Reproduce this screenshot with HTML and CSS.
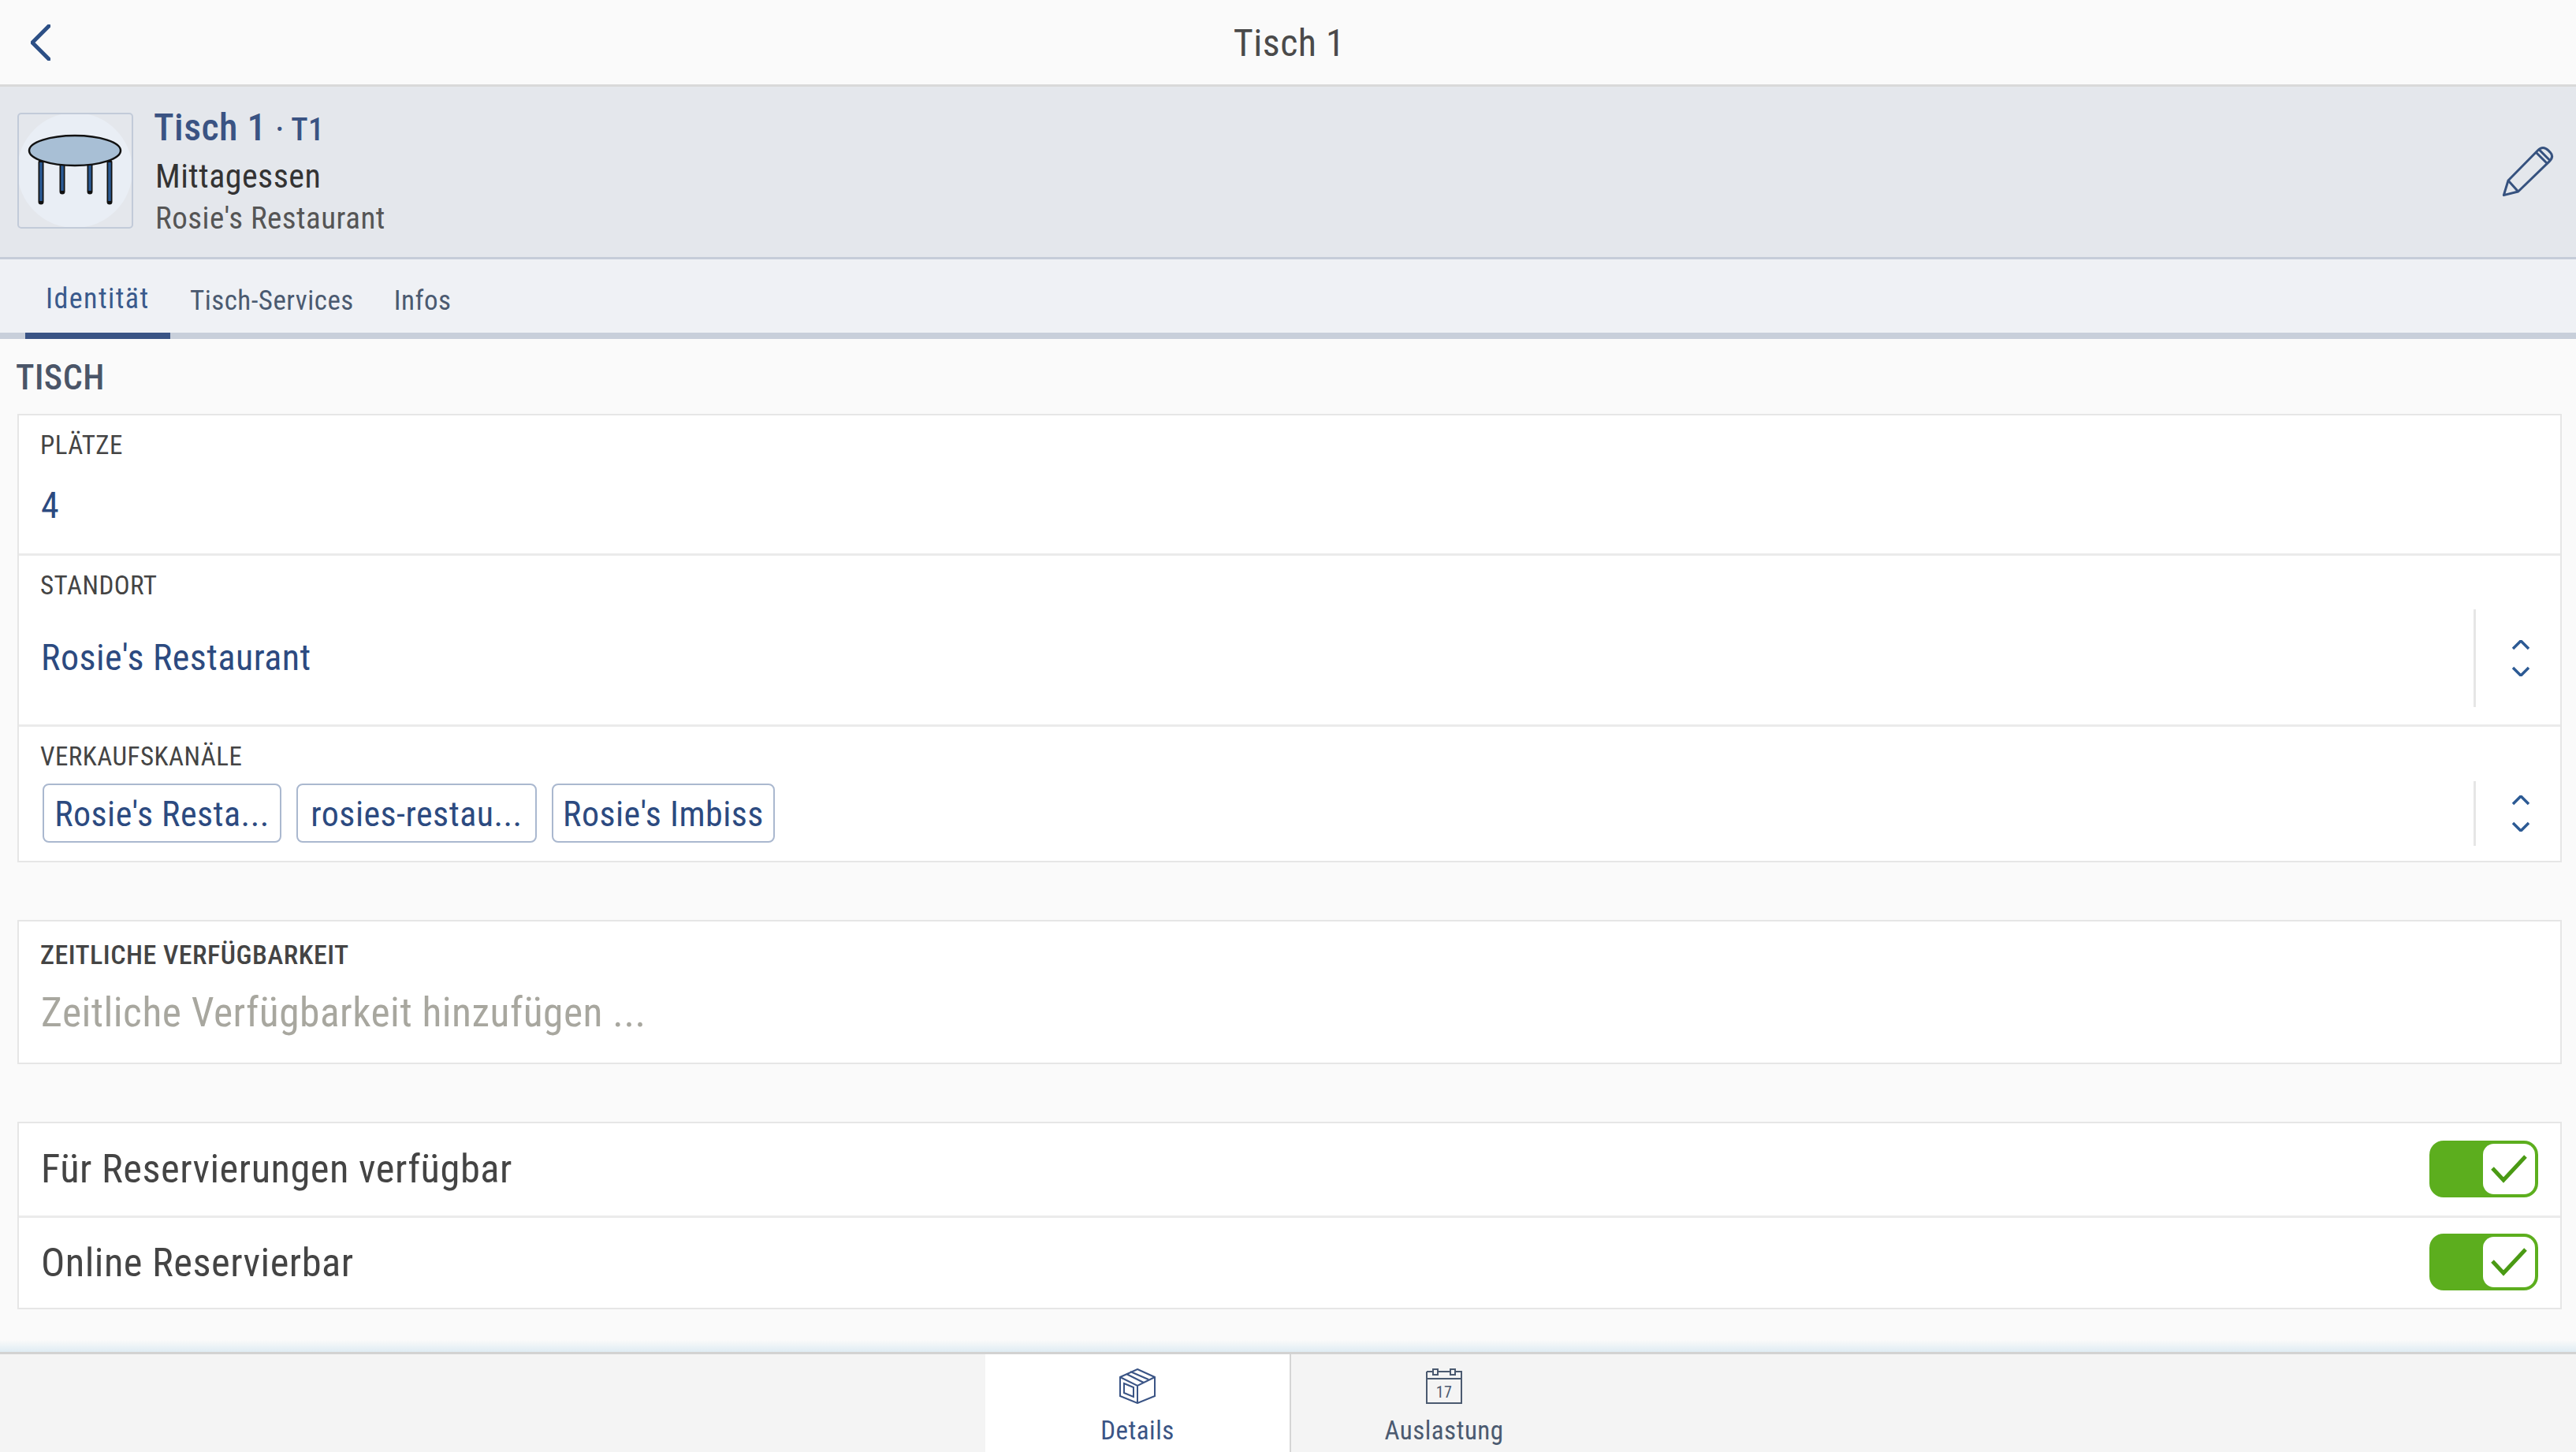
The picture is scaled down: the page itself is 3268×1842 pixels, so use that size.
FILE: index.html
```html
<!DOCTYPE html>
<html lang="de">
<head>
    <meta charset="UTF-8">
    <title>Tisch 1</title>
    <link rel="stylesheet" href="styles.css">
</head>
<body>
    <!-- Top bar -->
    <header class="topbar">
        <svg class="back" width="25" height="46" viewBox="0 0 25 46"><path d="M23 2 L2 23 L23 44"/></svg>
        <div class="topbar-title">Tisch 1</div>
    </header>

    <!-- Table summary -->
    <section class="summary">
        <div class="thumb">
            <svg width="143" height="143" viewBox="24 144 143 143">
                <circle class="thumb-bg" cx="95" cy="215" r="73"/>
                <g class="leg"><line x1="52" y1="205" x2="52" y2="255"/><line x1="79" y1="205" x2="79" y2="242"/><line x1="114" y1="205" x2="114" y2="242"/><line x1="139" y1="205" x2="139" y2="255"/></g>
                <g class="leg-in"><line x1="52" y1="205" x2="52" y2="254"/><line x1="79" y1="205" x2="79" y2="241"/><line x1="114" y1="205" x2="114" y2="241"/><line x1="139" y1="205" x2="139" y2="254"/></g>
                <ellipse class="table-top" cx="95" cy="190" rx="58" ry="19"/>
            </svg>
        </div>
        <div class="summary-text">
            <div class="summary-name">Tisch 1 <small>· T1</small></div>
            <div class="summary-service">Mittagessen</div>
            <div class="summary-place">Rosie's Restaurant</div>
        </div>
        <svg class="pencil" width="70" height="70" viewBox="810 160 210 210">
            <path d="M826 354 L843 298 L955 184 Q975 163 995 183 L1003 191 Q1018 207 1000 225 L881 340 Z"/>
            <path d="M843 298 L881 340 M948 190 L990 232 M960 180 L1000 220"/>
        </svg>
    </section>

    <!-- Tabs -->
    <nav class="tabs">
        <div class="tab active">Identität</div>
        <div class="tab">Tisch-Services</div>
        <div class="tab">Infos</div>
    </nav>

    <main class="content">
        <h2 class="section-title">TISCH</h2>

        <div class="card">
            <div class="row row-seats">
                <div class="field-label">PLÄTZE</div>
                <div class="field-value">4</div>
            </div>
            <div class="row row-place">
                <div class="field-label">STANDORT</div>
                <div class="field-value">Rosie's Restaurant</div>
                <div class="picker picker-tall">
                    <svg width="22" height="46" viewBox="0 0 22 46"><path d="M1 11 L11 1 L21 11 M1 35 L11 45 L21 35"/></svg>
                </div>
            </div>
            <div class="row row-channels">
                <div class="field-label">VERKAUFSKANÄLE</div>
                <div class="chips">
                    <span class="chip chip-1">Rosie's Resta...</span>
                    <span class="chip chip-2">rosies-restau...</span>
                    <span class="chip chip-3">Rosie's Imbiss</span>
                </div>
                <div class="picker picker-short">
                    <svg width="22" height="46" viewBox="0 0 22 46"><path d="M1 11 L11 1 L21 11 M1 35 L11 45 L21 35"/></svg>
                </div>
            </div>
        </div>

        <div class="card card-gap">
            <div class="row row-time">
                <div class="field-label strong">ZEITLICHE VERFÜGBARKEIT</div>
                <div class="field-placeholder">Zeitliche Verfügbarkeit hinzufügen ...</div>
            </div>
        </div>

        <div class="card card-gap">
            <div class="row row-toggle">
                <span>Für Reservierungen verfügbar</span>
                <div class="toggle"><div class="knob"><svg width="46" height="38" viewBox="0 0 46 38"><path d="M2 18 L16 33 L44 3"/></svg></div></div>
            </div>
            <div class="row row-toggle">
                <span>Online Reservierbar</span>
                <div class="toggle"><div class="knob"><svg width="46" height="38" viewBox="0 0 46 38"><path d="M2 18 L16 33 L44 3"/></svg></div></div>
            </div>
        </div>
    </main>

    <div class="shade"></div>

    <!-- Bottom navigation -->
    <footer class="bottombar">
        <div class="bottom-tab active">
            <svg width="46" height="45" viewBox="0 0 46 45">
                <path d="M23 1 L45 11 V35 L23 44 L1 35 V11 Z M1 11 L23 22 L45 11 M23 22 V44 M14 4 L37 14 M9 7 L31 18 M6 19 L18 24 V36 L6 31 Z"/>
            </svg>
            <span>Details</span>
        </div>
        <div class="bottom-tab">
            <svg width="46" height="45" viewBox="0 0 46 45">
                <path d="M1 4 H9 M15 4 H31 M37 4 H45 V44 H1 V4 M1 13 H45 M9 1 H15 V8 H9 Z M31 1 H37 V8 H31 Z"/>
                <text x="23" y="37" text-anchor="middle">17</text>
            </svg>
            <span>Auslastung</span>
        </div>
    </footer>
</body>
</html>
```

FILE: styles.css
```css
* {
    box-sizing: border-box;
}

body {
    margin: 0;
    width: 3268px;
    height: 1842px;
    overflow: hidden;
    display: flex;
    flex-direction: column;
    font-family: "Roboto", "Liberation Sans", sans-serif;
    font-stretch: 75%;
    letter-spacing: 0.03em;
    background-color: #fafafa;
    color: #444;
}

svg {
    display: block;
    fill: none;
}

/* top bar */
.topbar {
    height: 110px;
    flex: none;
    display: grid;
    grid-template-columns: 1fr auto 1fr;
    align-items: center;
    padding-left: 39px;
    background: #fafafa;
    border-bottom: 3px solid #d9d9d9;
}

.back path {
    stroke: #2c4f85;
    stroke-width: 5;
    stroke-linecap: round;
    stroke-linejoin: round;
}

.topbar-title {
    padding-top: 2px;
    font-size: 48px;
    color: #4a4a4a;
    margin-left: -36px;
}

/* summary */
.summary {
    height: 219px;
    flex: none;
    display: flex;
    align-items: center;
    padding: 0 27px 4px 22px;
    background: #e4e7ec;
    border-bottom: 3px solid #c5ccd9;
}

.thumb {
    width: 147px;
    height: 147px;
    flex: none;
    overflow: hidden;
    border: 2px solid #c2cbd9;
    border-radius: 5px;
    background: #e4e7ec;
    margin-right: 26px;
}

.thumb-bg {
    fill: #e9eef5;
}

.leg line {
    stroke: #111;
    stroke-width: 7;
    stroke-linecap: round;
}

.leg-in line {
    stroke: #2a5a94;
    stroke-width: 3.5;
}

.table-top {
    fill: #a8bfd5;
    stroke: #111;
    stroke-width: 2.5;
}

.summary-name {
    font-size: 48px;
    font-weight: 500;
    line-height: 60px;
    color: #3a5383;
}

.summary-name small {
    font-size: 40px;
}

.summary-service {
    margin-left: 2px;
    font-size: 42px;
    line-height: 58px;
    color: #333;
}

.summary-place {
    margin-left: 2px;
    font-size: 39px;
    line-height: 48px;
    color: #555;
}

.pencil {
    margin-left: auto;
    margin-top: 4px;
}

.pencil path {
    stroke: #36527f;
    stroke-width: 9;
    stroke-linejoin: round;
}

/* tabs */
.tabs {
    height: 101px;
    flex: none;
    display: flex;
    padding-left: 32px;
    background: #eff1f5;
    border-bottom: 8px solid #c8cfda;
}

.tab {
    height: 101px;
    padding: 6px 26px 2px 25px;
    display: flex;
    align-items: center;
    font-size: 35px;
    color: #4b5a70;
}

.tab.active {
    width: 184px;
    padding: 6px 0 0 26px;
    font-size: 36px;
    letter-spacing: 0.04em;
    color: #3a5a8c;
    border-bottom: 8px solid #3a5485;
}

/* content */
.content {
    flex: 1;
    padding: 0 18px 0 22px;
}

.section-title {
    margin: 0 0 0 -2px;
    height: 95px;
    line-height: 98px;
    font-size: 44px;
    font-weight: 500;
    color: #4a5568;
}

.card {
    background: #fff;
    border: 2px solid #e6e6e6;
}

.card-gap {
    margin-top: 73px;
}

.row {
    position: relative;
    padding: 0 28px;
}

.row + .row {
    border-top: 3px solid #ebebeb;
}

.row-seats {
    height: 175px;
}

.row-place {
    height: 217px;
}

.row-channels {
    height: 173px;
}

.row-time {
    height: 179px;
}

.field-label {
    margin-left: -1px;
    padding-top: 18px;
    font-size: 33px;
    line-height: 40px;
    color: #444;
}

.field-label.strong {
    padding-top: 22px;
    font-size: 34px;
    font-weight: 500;
}

.field-value {
    margin-top: 28px;
    font-size: 46px;
    line-height: 56px;
    color: #2c4a80;
}

.row-place .field-value {
    margin-top: 43px;
}

.field-placeholder {
    margin-top: 24px;
    font-size: 51.5px;
    line-height: 60px;
    color: #a8a79f;
}

.picker {
    position: absolute;
    right: 0;
    width: 110px;
    padding-left: 6px;
    display: flex;
    align-items: center;
    justify-content: center;
    border-left: 3px solid #e6e6e6;
}

.picker-tall {
    top: 68px;
    height: 124px;
}

.picker-short {
    top: 69px;
    height: 82px;
}

.picker path {
    stroke: #2c5a94;
    stroke-width: 3.5;
}

.chips {
    display: flex;
    gap: 19px;
    margin: 14px 0 0 2px;
}

.chip {
    height: 75px;
    padding-top: 2px;
    display: flex;
    align-items: center;
    justify-content: center;
    white-space: nowrap;
    font-size: 44px;
    color: #2c4a80;
    border: 2px solid #aab8cf;
    border-radius: 8px;
}

.chip-1 {
    width: 303px;
}

.chip-2 {
    width: 305px;
}

.chip-3 {
    width: 283px;
}

.row-toggle {
    height: 117px;
    display: flex;
    align-items: center;
    justify-content: space-between;
    padding-right: 28px;
    padding-bottom: 2px;
    font-size: 50.5px;
    color: #444;
}

.toggle {
    width: 138px;
    height: 72px;
    padding: 4px;
    display: flex;
    justify-content: flex-end;
    background: #5cae1e;
    border-radius: 18px;
}

.knob {
    width: 66px;
    height: 64px;
    display: flex;
    align-items: center;
    justify-content: center;
    background: #fff;
    border-radius: 14px;
}

.knob path {
    stroke: #4a9a14;
    stroke-width: 5;
}

/* bottom nav */
.shade {
    height: 15px;
    flex: none;
    background: linear-gradient(#fafafa, #dfecf3);
}

.bottombar {
    height: 127px;
    flex: none;
    display: flex;
    justify-content: center;
    padding-left: 8px;
    background: #f4f4f4;
    border-top: 3px solid #d2d2d2;
}

.bottom-tab {
    width: 388px;
    padding-top: 18px;
    display: flex;
    flex-direction: column;
    align-items: center;
    gap: 14px;
    font-size: 33px;
    color: #4b5a70;
}

.bottom-tab.active {
    background: #fff;
    color: #3a5485;
    border-right: 2px solid #d5d5d5;
}

.bottom-tab path {
    stroke: #4b5a70;
    stroke-width: 2;
}

.bottom-tab.active path {
    stroke: #3a5485;
}

.bottom-tab text {
    font-size: 20px;
    fill: #4b5a70;
}
```
